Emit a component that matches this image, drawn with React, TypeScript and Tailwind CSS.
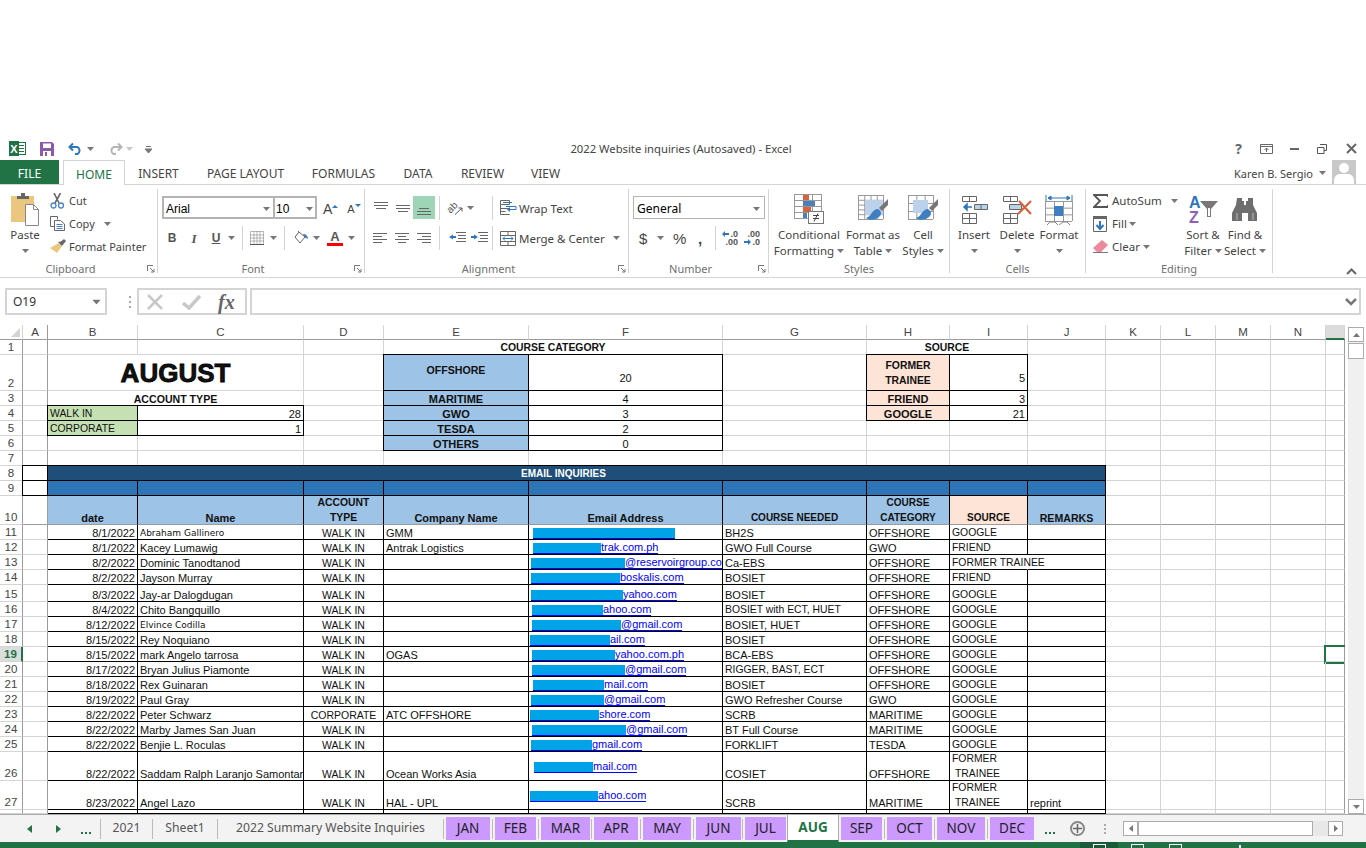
import React from "react";
import clsx from "clsx";
import { twMerge } from "tailwind-merge";

const UI = "font-['Noto_Sans',sans-serif]";
const ARIAL = "font-['Liberation_Sans',Arial,sans-serif]";

const Caret = ({ className }: { className?: string }) => (
  <svg width="7" height="4" viewBox="0 0 7 4" className={clsx("shrink-0", className)}>
    <path d="M0 0h7L3.5 4z" fill="#777" />
  </svg>
);

const Launcher = () => (
  <svg width="8" height="8" viewBox="0 0 8 8" className="absolute right-[2px] bottom-0">
    <path d="M.5 6V.5H6M3 3l4 4M7 4v3H4" fill="none" stroke="#777" />
  </svg>
);

// y, from, to
const Lines = ({ segs }: { segs: number[][] }) => (
  <svg width="14" height="14" viewBox="0 0 14 14">
    <path d={segs.map(([y, a, b]) => `M${a} ${y + 0.5}H${b}`).join("")} stroke="#666" />
  </svg>
);

const ExcelLogo = () => (
  <svg width="17" height="17" viewBox="0 0 17 17">
    <rect x="7.5" y="2.5" width="9" height="12" fill="#fff" stroke="#217346" />
    <path d="M10 5.5h5M10 8.5h5M10 11.5h5" stroke="#217346" />
    <rect x="0" y="1" width="10" height="15" fill="#217346" />
    <text x="5" y="12.5" textAnchor="middle" fontSize="11" fontWeight="700" fill="#fff" fontFamily="Liberation Sans">X</text>
  </svg>
);
const SaveIcon = () => (
  <svg width="14" height="14" viewBox="0 0 14 14">
    <path d="M0 0h12l2 2v12H0z" fill="#8a5bab" />
    <rect x="3" y="1.5" width="8" height="4.5" fill="#fff" />
    <rect x="3" y="9" width="8" height="5" fill="#fff" />
    <rect x="5" y="10" width="2" height="4" fill="#8a5bab" />
  </svg>
);
const UndoIcon = ({ color }: { color: string }) => (
  <svg width="15" height="13" viewBox="0 0 15 13">
    <path d="M5 1.5 1.5 5 5 8.500M2 5h7.500a4 4 0 0 1 0 7H7" fill="none" stroke={color} strokeWidth="2" />
  </svg>
);
const PasteIcon = () => (
  <svg width="30" height="34" viewBox="0 0 30 34">
    <rect x="1" y="3" width="23" height="26" fill="#eac67e" />
    <path d="M7 6V3h4V0h4v3h4v3z" fill="#666" />
    <path d="M15.500 11.500h8l5 5v16h-13z" fill="#fff" stroke="#888" />
    <path d="M23.500 11.500v5h5" fill="none" stroke="#888" />
  </svg>
);
const CutIcon = () => (
  <svg width="15" height="16" viewBox="0 0 15 16">
    <path d="M4 0l5 10M10.500 0 5 10" stroke="#666" strokeWidth="1.600" />
    <circle cx="3.500" cy="12.500" r="2.500" fill="none" stroke="#4a86c5" strokeWidth="1.300" />
    <circle cx="11" cy="12.500" r="2.500" fill="none" stroke="#4a86c5" strokeWidth="1.300" />
  </svg>
);
const CopyIcon = () => (
  <svg width="15" height="15" viewBox="0 0 15 15">
    <path d="M.5.500h7v3M.5.500v10h4" fill="none" stroke="#666" />
    <path d="M4.500 4.500h6l4 3.500v6.500h-10z" fill="#fff" stroke="#666" />
    <path d="M6.500 8.500h6M6.500 10.500h6M6.500 12.500h6" stroke="#4a7fba" />
  </svg>
);
const PainterIcon = () => (
  <svg width="16" height="15" viewBox="0 0 16 15">
    <path d="M9 4 12 7 7 14 0 9z" fill="#eac67e" />
    <path d="M8 3l4 4 1.500-2L16 2l-2-2-3 2.500z" fill="#666" />
  </svg>
);
const FillIcon = () => (
  <svg width="15" height="14" viewBox="0 0 15 14">
    <path d="M5 1 1 6l5 6 5-6z" fill="#fff" stroke="#666" />
    <path d="M5 1 4 0" stroke="#666" />
    <path d="M9 3c3 0 5 2 5 5-1-1-2-1-3-1z" fill="#4a7fba" />
  </svg>
);
const BordersIcon = () => (
  <svg width="14" height="14" viewBox="0 0 14 14">
    <path d="M.5.500h13v13H.5zM.5 7h13M7 .500v13M.5 4h13M.5 10h13M4 .500v13M10 .500v13" fill="none" stroke="#777" strokeDasharray="1 1" />
    <path d="M0 13.500h14" stroke="#555" />
  </svg>
);
const OrientationIcon = () => (
  <svg width="17" height="16" viewBox="0 0 17 16">
    <text x="0" y="11" fontSize="10" fill="#555" fontFamily="Liberation Sans" transform="rotate(-45 5 8)">ab</text>
    <path d="M8 14.500 15 8M15 8v3.500M15 8h-3.500" stroke="#555" fill="none" />
  </svg>
);
const IndentIcon = ({ right }: { right?: boolean }) => (
  <svg width="17" height="12" viewBox="0 0 17 12">
    <path d="M7 .500h10M9 3.500h8M9 6.500h8M7 9.500h10" stroke="#666" />
    <path d={right ? "M3 2.500 7 5 3 7.500V6H0V4h3z" : "M4 2.500 0 5l4 2.500V6h3V4H4z"} fill="#2d77bd" />
  </svg>
);
const WrapIcon = () => (
  <svg width="17" height="16" viewBox="0 0 17 16">
    <path d="M.5.500h9v4h-9zM.5 4.500v10h9M.5 8.500h9M.5 11.500h5" fill="none" stroke="#666" />
    <path d="M3 2.500h9M6 6.500h10v3h-8" fill="none" stroke="#2d77bd" />
    <path d="M10 7 7 9.500 10 12z" fill="#2d77bd" />
  </svg>
);
const MergeIcon = () => (
  <svg width="16" height="15" viewBox="0 0 16 15">
    <path d="M.5.500h15v14H.5zM.5 4.500h15M.5 10.500h15M8 .500v4M8 10.500v4" fill="none" stroke="#666" />
    <path d="M3 7.500h10M3 7.500l2-2M3 7.500l2 2M13 7.500l-2-2M13 7.500l-2 2" fill="none" stroke="#2d77bd" />
  </svg>
);
const Grid = ({ x, y, w, h, cols, rows }: { x: number; y: number; w: number; h: number; cols: number; rows: number }) => {
  let d = "";
  for (let i = 0; i <= cols; i++) d += `M${x + (i * w) / cols + 0.5} ${y}v${h}`;
  for (let i = 0; i <= rows; i++) d += `M${x} ${y + (i * h) / rows + 0.5}h${w}`;
  return <path d={d} stroke="#999" fill="none" />;
};
const CondIcon = () => (
  <svg width="30" height="31" viewBox="0 0 30 31">
    <Grid x={0} y={0} w={27} h={24} cols={3} rows={4} />
    <rect x="9" y="1" width="6" height="5" fill="#d8623c" />
    <rect x="9" y="7" width="12" height="5" fill="#4a7fba" />
    <rect x="9" y="13" width="8" height="5" fill="#d8623c" />
    <rect x="9" y="19" width="4" height="5" fill="#4a7fba" />
    <rect x="14.500" y="17.500" width="15" height="12" fill="#fff" stroke="#777" />
    <path d="M19 21.500h6M19 24.500h6M24 19.500l-4 8" stroke="#444" fill="none" />
  </svg>
);
const TableIcon = ({ big }: { big?: boolean }) => (
  <svg width="30" height="31" viewBox="0 0 30 31">
    <Grid x={0} y={1} w={25} h={24} cols={big ? 3 : 4} rows={big ? 3 : 5} />
    <rect x={big ? 5 : 7} y={6} width={big ? 15 : 18} height={big ? 13 : 15} fill="#bcd2ea" />
    <path d="M30 5 21 14l3 3 6-6z" fill="#777" />
    <path d="M20 15c-3 0-5 2-7 5-1 2-3 3-5 4 4 3 11 2 14-2 2-3 1-5-2-7z" fill="#3f7fc1" />
  </svg>
);
const InsertIcon = () => (
  <svg width="27" height="28" viewBox="0 0 27 28">
    <path d="M1.500.500h14v5h-14zM8.500.500v5M1.500 17.500h14v10h-14zM1.500 22.500h14M8.500 17.500v10" fill="none" stroke="#666" />
    <path d="M13.500 8.500h13v5h-13zM20 8.500v5" fill="#bcd2ea" stroke="#666" />
    <path d="M11 11H3M3 11l3-3v6z" stroke="#2d77bd" fill="#2d77bd" strokeWidth="1.500" />
  </svg>
);
const DeleteIcon = () => (
  <svg width="31" height="28" viewBox="0 0 31 28">
    <path d="M1.500.500h14v5h-14zM8.500.500v5M1.500 17.500h14v10h-14zM1.500 22.500h14M8.500 17.500v10" fill="none" stroke="#666" />
    <path d="M7.500 8.500h12v5h-12z" fill="#bcd2ea" stroke="#666" />
    <path d="M17 5l12 13M29 5 16 18" stroke="#d8623c" strokeWidth="2.200" />
  </svg>
);
const FormatIcon = () => (
  <svg width="28" height="30" viewBox="0 0 28 30">
    <path d="M1 0v6M27 0v6M3 3h22M3 3l3-2v4zM25 3l-3-2v4z" stroke="#2d77bd" fill="#2d77bd" />
    <Grid x={0} y={6} w={27} h={20} cols={3} rows={3} />
    <rect x="9" y="11" width="9" height="10" fill="#3f7fc1" />
    <path d="M2 30l3-3h5l3 3M14 30l4-3h4l3 3" fill="#fff" stroke="#888" />
  </svg>
);
const SigmaIcon = () => (
  <svg width="15" height="14" viewBox="0 0 15 14">
    <path d="M15 3V1H1l6 6-6 6h14v-2" fill="none" stroke="#555" strokeWidth="1.800" />
  </svg>
);
const FillDownIcon = () => (
  <svg width="14" height="16" viewBox="0 0 14 16">
    <path d="M.5.500h13v15H.5z" fill="#fff" stroke="#666" />
    <rect width="14" height="3" fill="#666" />
    <path d="M7 5v7M3.500 9 7 13l3.500-4" fill="none" stroke="#2d77bd" strokeWidth="2" />
  </svg>
);
const EraserIcon = () => (
  <svg width="15" height="13" viewBox="0 0 15 13">
    <path d="M9 0l6 5-7 7H4L0 8z" fill="#ec8a9c" />
    <path d="M0 12.500h15" stroke="#777" />
  </svg>
);
const SortIcon = () => (
  <svg width="31" height="31" viewBox="0 0 31 31">
    <text x="1" y="14" fontSize="16" fontWeight="700" fill="#2d77bd" fontFamily="Liberation Sans">A</text>
    <text x="1" y="29" fontSize="16" fontWeight="700" fill="#8f5fb5" fontFamily="Liberation Sans">Z</text>
    <path d="M12 7h18l-7 8v8h-4v-8z" fill="#777" />
    <path d="M20 14v8h2v-8z" fill="#fff" />
  </svg>
);
const FindIcon = () => (
  <svg width="26" height="23" viewBox="0 0 26 23">
    <path d="M5 0h5v3h2v4h2V3h2V0h5v7l4 8v8H16v-8h-6v8H0v-8l4-8z" fill="#6e6e6e" />
    <path d="M5 15v7M21 15v7" stroke="#bbb" />
  </svg>
);

// shared ribbon pieces
const Group = ({ w, label, launcher, children }: { w: string; label: string; launcher?: boolean; children: React.ReactNode }) => (
  <div className={clsx("relative flex h-[84px] shrink-0 flex-col border-r border-[#d4d4d4]", w)}>
    <div className="h-[73px] shrink-0">{children}</div>
    <div className={clsx("shrink-0 text-center text-[11px] leading-[14px] text-[#6f6f6f]", launcher && "pr-[16px]")}>{label}</div>
    {launcher && <Launcher />}
  </div>
);

const Big = ({ w, icon, l1, l2 }: { w: string; icon: React.ReactNode; l1: string; l2?: string }) => (
  <div className={clsx("flex shrink-0 flex-col items-center", w)}>
    <div className="mt-[3px] flex h-[35px] items-center justify-center">{icon}</div>
    <div className="leading-[16px]">{l1}</div>
    {l2 ? (
      <div className="flex items-center gap-[3px] leading-[16px]">
        {l2}
        <Caret />
      </div>
    ) : (
      <div className="flex h-[16px] items-center">
        <Caret />
      </div>
    )}
  </div>
);

const Small = ({ icon, label, caret, className }: { icon: React.ReactNode; label: string; caret?: React.ReactNode; className?: string }) => (
  <div className={clsx("flex h-[23px] items-center", className)}>
    <div className="flex w-[19px] shrink-0 items-center">{icon}</div>
    <span>{label}</span>
    {caret}
  </div>
);

const Btn = ({ w, children, className }: { w: string; children: React.ReactNode; className?: string }) => (
  <div className={clsx("flex h-[22px] shrink-0 items-center justify-center", w, className)}>{children}</div>
);
const Sep = ({ className }: { className?: string }) => <div className={clsx("h-[24px] w-px shrink-0 bg-[#d4d4d4]", className)} />;

const Ribbon = () => (
  <div className={clsx(UI, "flex h-[93px] border-b border-[#d4d4d4] pt-[4px] text-[11.5px] text-[#444]")}>
    <Group w="w-[158px]" label="Clipboard" launcher>
      <div className="flex">
        <Big w="w-[50px]" icon={<PasteIcon />} l1="Paste" />
        <div className="text-[11px]">
          <Small icon={<CutIcon />} label="Cut" />
          <Small icon={<CopyIcon />} label="Copy" caret={<Caret className="ml-[9px]" />} />
          <Small icon={<PainterIcon />} label="Format Painter" />
        </div>
      </div>
    </Group>

    <Group w="w-[207px]" label="Font" launcher>
      <div className="mt-[7px] ml-[4px] flex h-[23px]">
        <div className={clsx(ARIAL, "flex w-[111px] items-center justify-between border-2 border-r-0 border-[#b4b4b4] px-[2px] pt-[2px] text-[12px] text-black")}>
          Arial
          <Caret className="mr-[1px]" />
        </div>
        <div className={clsx(ARIAL, "flex w-[44px] items-center justify-between border-2 border-[#b4b4b4] px-[1px] pt-[2px] text-[12px] text-black")}>
          10
          <Caret className="mr-[1px]" />
        </div>
        <div className={clsx(ARIAL, "ml-[6px] flex items-end text-[14px] leading-[20px]")}>
          A<span className="mb-[11px] h-0 w-0 border-x-[3px] border-b-[3px] border-x-transparent border-b-[#2d77bd]" />
        </div>
        <div className={clsx(ARIAL, "ml-[9px] flex items-end text-[11px] leading-[19px]")}>
          A<span className="mb-[12px] h-0 w-0 border-x-[3px] border-t-[3px] border-x-transparent border-t-[#2d77bd]" />
        </div>
      </div>
      <div className="mt-[8px] ml-[3px] flex h-[22px] items-center">
        <Btn w="w-[22px]" className={clsx(ARIAL, "text-[12px] font-bold text-[#555]")}>B</Btn>
        <Btn w="w-[22px]" className="font-['Liberation_Serif',serif] text-[13px] font-bold text-[#555] italic">I</Btn>
        <Btn w="w-[22px]" className={clsx(ARIAL, "text-[12px] font-bold text-[#555] underline")}>U</Btn>
        <Caret className="ml-[1px]" />
        <Sep className="ml-[7px]" />
        <Btn w="w-[14px]" className="ml-[7px]"><BordersIcon /></Btn>
        <Caret className="ml-[6px]" />
        <Sep className="ml-[7px]" />
        <Btn w="w-[15px]" className="ml-[9px]"><FillIcon /></Btn>
        <Caret className="ml-[4px]" />
        <div className={clsx(ARIAL, "ml-[7px] flex w-[16px] flex-col items-center text-[13px] leading-[13px] font-bold text-[#555]")}>
          A<div className="h-[3px] w-[16px] bg-[#f00]" />
        </div>
        <Caret className="ml-[5px]" />
      </div>
    </Group>

    <Group w="w-[264px]" label="Alignment" launcher>
      <div className="mt-[7px] ml-[5px] flex h-[23px] items-center">
        <Btn w="w-[22px]"><Lines segs={[[1, 0, 14], [4, 0, 14], [7, 2, 12]]} /></Btn>
        <Btn w="w-[21px]"><Lines segs={[[4, 0, 14], [7, 0, 14], [10, 2, 12]]} /></Btn>
        <Btn w="w-[22px]" className="h-[23px] bg-[#9fd5b7]"><Lines segs={[[7, 2, 12], [10, 0, 14], [13, 0, 14]]} /></Btn>
        <Sep className="ml-[4px]" />
        <Btn w="w-[28px]" className="ml-[6px] gap-[3px]"><OrientationIcon /><Caret /></Btn>
        <Sep className="ml-[18px]" />
        <div className="ml-[7px] w-[19px]"><WrapIcon /></div>
        <span className="pt-[1px]">Wrap Text</span>
      </div>
      <div className="mt-[8px] ml-[4px] flex h-[22px] items-center">
        <Btn w="w-[22px]"><Lines segs={[[2, 0, 14], [5, 0, 9], [8, 0, 14], [11, 0, 9]]} /></Btn>
        <Btn w="w-[22px]"><Lines segs={[[2, 0, 14], [5, 3, 11], [8, 0, 14], [11, 3, 11]]} /></Btn>
        <Btn w="w-[22px]"><Lines segs={[[2, 0, 14], [5, 5, 14], [8, 0, 14], [11, 5, 14]]} /></Btn>
        <Sep className="ml-[4px]" />
        <Btn w="w-[22px]" className="ml-[6px]"><IndentIcon /></Btn>
        <Btn w="w-[22px]"><IndentIcon right /></Btn>
        <Sep className="ml-[2px]" />
        <div className="ml-[7px] w-[19px]"><MergeIcon /></div>
        <span>Merge &amp; Center</span>
        <Caret className="ml-[8px]" />
      </div>
    </Group>

    <Group w="w-[140px]" label="Number" launcher>
      <div className="mt-[7px] ml-[4px] flex h-[23px] w-[132px] items-center justify-between border border-[#b4b4b4] px-[3px] pt-[2px] text-[12px] text-black">
        General
        <Caret className="mr-[1px]" />
      </div>
      <div className="mt-[8px] ml-[10px] flex h-[22px] items-center">
        <span className={clsx(ARIAL, "w-[9px] text-[15px] leading-[15px]")}>$</span>
        <Caret className="ml-[9px]" />
        <span className={clsx(ARIAL, "ml-[9px] w-[14px] text-[15px] leading-[15px]")}>%</span>
        <span className={clsx(ARIAL, "ml-[11px] w-[5px] text-[15px] leading-[15px] font-bold")}>,</span>
        <Sep className="ml-[12px]" />
        <div className={clsx(ARIAL, "ml-[7px] flex w-[15px] flex-col items-end text-[9px] leading-[8px] font-bold text-[#555]")}>
          <span className="flex items-center">
            <svg width="7" height="6" viewBox="0 0 7 6" className="mr-[1px]"><path d="M3 0 0 3l3 3V4h4V2H3z" fill="#2d77bd" /></svg>.0
          </span>
          <span>.00</span>
        </div>
        <div className={clsx(ARIAL, "ml-[7px] flex w-[15px] flex-col items-end text-[9px] leading-[8px] font-bold text-[#555]")}>
          <span>.00</span>
          <span className="flex items-center">
            <svg width="7" height="6" viewBox="0 0 7 6" className="mr-[1px]"><path d="M4 0l3 3-3 3V4H0V2h4z" fill="#2d77bd" /></svg>.0
          </span>
        </div>
      </div>
    </Group>

    <Group w="w-[181px]" label="Styles">
      <div className="flex pl-[7px]">
        <Big w="w-[66px]" icon={<CondIcon />} l1="Conditional" l2="Formatting" />
        <Big w="w-[62px]" icon={<TableIcon />} l1="Format as" l2="Table" />
        <Big w="w-[38px]" icon={<TableIcon big />} l1="Cell" l2="Styles" />
      </div>
    </Group>

    <Group w="w-[136px]" label="Cells">
      <div className="flex pl-[5px]">
        <Big w="w-[38px]" icon={<InsertIcon />} l1="Insert" />
        <Big w="w-[48px]" icon={<DeleteIcon />} l1="Delete" />
        <Big w="w-[36px]" icon={<FormatIcon />} l1="Format" />
      </div>
    </Group>

    <Group w="w-[187px]" label="Editing">
      <div className="flex pl-[7px]">
        <div className="w-[89px]">
          <Small icon={<SigmaIcon />} label="AutoSum" caret={<Caret className="ml-[9px]" />} />
          <Small icon={<FillDownIcon />} label="Fill" caret={<Caret className="ml-[2px]" />} />
          <Small icon={<EraserIcon />} label="Clear" caret={<Caret className="ml-[3px]" />} />
        </div>
        <Big w="w-[42px]" icon={<SortIcon />} l1="Sort &" l2="Filter" />
        <Big w="w-[42px]" icon={<FindIcon />} l1="Find &" l2="Select" />
      </div>
    </Group>

    <div className="flex flex-1 items-end justify-end pr-[9px] pb-[2px]">
      <svg width="11" height="7" viewBox="0 0 11 7">
        <path d="M1 6l4.500-4.500L10 6" fill="none" stroke="#666" strokeWidth="2" />
      </svg>
    </div>
  </div>
);

const TitleBar = () => (
  <div className={clsx(UI, "flex h-[23px] items-center text-[11.25px] text-[#444]")}>
    <div className="flex w-[200px] items-center pl-[9px]">
      <ExcelLogo />
      <div className="ml-[14px]"><SaveIcon /></div>
      <div className="ml-[14px]"><UndoIcon color="#2d77bd" /></div>
      <Caret className="ml-[4px]" />
      <div className="ml-[14px] -scale-x-100"><UndoIcon color="#b4b4b4" /></div>
      <Caret className="ml-[3px] opacity-40" />
      <svg width="7" height="8" viewBox="0 0 7 8" className="ml-[12px]">
        <path d="M1 1.500h5M0 4h7L3.500 8z" stroke="#777" fill="#777" />
      </svg>
    </div>
    <div className="flex-1 pr-[4px] text-center">2022 Website inquiries (Autosaved) - Excel</div>
    <div className="flex w-[200px] items-center justify-end pr-[9px]">
      <span className="mr-[18px] text-[14px] leading-[14px] font-bold text-[#666]">?</span>
      <svg width="13" height="10" viewBox="0 0 13 10" className="mr-[17px]">
        <path d="M.5.500h12v9H.5zM.5 2.500h12M6.500 8V4M4.500 6l2-2 2 2" fill="none" stroke="#666" />
      </svg>
      <div className="mr-[18px] h-[2px] w-[9px] bg-[#666]" />
      <svg width="10" height="10" viewBox="0 0 10 10" className="mr-[19px]">
        <path d="M3 .500h6.500v6H7M.5 3.500H7v6H.5z" fill="#fff" stroke="#555" />
      </svg>
      <svg width="11" height="11" viewBox="0 0 11 11">
        <path d="M1 1l9 9M10 1l-9 9" stroke="#666" strokeWidth="2" />
      </svg>
    </div>
  </div>
);

const RibbonTabs = () => (
  <div className={clsx(UI, "flex h-[25px] items-stretch border-b border-[#d4d4d4] text-[12px] text-[#444]")}>
    <div className="flex w-[59px] items-center justify-center bg-[#217346] pt-[4px] text-white">FILE</div>
    <div className="relative ml-[4px] flex h-[25px] w-[62px] items-center justify-center border-x border-t border-[#d4d4d4] bg-white pt-[4px] text-[#217346]">HOME</div>
    <div className="flex w-[67px] items-center justify-center pt-[4px]">INSERT</div>
    <div className="flex w-[107px] items-center justify-center pt-[4px]">PAGE LAYOUT</div>
    <div className="flex w-[89px] items-center justify-center pt-[4px]">FORMULAS</div>
    <div className="flex w-[60px] items-center justify-center pt-[4px]">DATA</div>
    <div className="flex w-[69px] items-center justify-center pt-[4px]">REVIEW</div>
    <div className="flex w-[57px] items-center justify-center pt-[4px]">VIEW</div>
    <div className="ml-auto flex items-center pr-[10px]">
      <span className="pt-[4px] text-[11px]">Karen B. Sergio</span>
      <Caret className="mt-[2px] mr-[3px] ml-[6px]" />
      <div className="ml-[3px] flex h-[24px] w-[24px] flex-col items-center overflow-hidden bg-[#c8c8c8]">
        <div className="mt-[3px] h-[10px] w-[10px] rounded-full bg-white" />
        <div className="mt-[1px] h-[12px] w-[20px] rounded-t-[6px] bg-white" />
      </div>
    </div>
  </div>
);

const FormulaBar = () => (
  <div className="flex h-[47px] items-start pt-[10px]">
    <div className={clsx(UI, "ml-[5px] flex h-[27px] w-[102px] items-center justify-between border-2 border-[#d4d4d4] pr-[5px] pl-[6px] text-[12px] text-[#333]")}>
      O19
      <Caret className="scale-125" />
    </div>
    <div className="ml-[15px] flex h-[27px] w-[15px] flex-col items-center justify-center gap-[3px]">
      <div className="h-[2px] w-[2px] bg-[#aaa]" />
      <div className="h-[2px] w-[2px] bg-[#aaa]" />
      <div className="h-[2px] w-[2px] bg-[#aaa]" />
    </div>
    <div className="flex h-[27px] w-[110px] items-center border-2 border-[#d4d4d4] pl-[8px]">
      <svg width="16" height="16" viewBox="0 0 16 16"><path d="M1 1l14 14M15 1 1 15" stroke="#c8c8c8" strokeWidth="2.500" /></svg>
      <svg width="19" height="16" viewBox="0 0 19 16" className="ml-[19px]"><path d="M1 9l6 5L18 2" fill="none" stroke="#c8c8c8" strokeWidth="3.500" /></svg>
      <span className="ml-[17px] font-['Liberation_Serif',serif] text-[20px] leading-[20px] font-bold text-[#666] italic">fx</span>
    </div>
    <div className="ml-[3px] flex h-[27px] w-[1111px] items-center justify-end border-2 border-[#d4d4d4] pr-[2px]">
      <svg width="12" height="8" viewBox="0 0 12 8"><path d="M1 1l5 5 5-5" fill="none" stroke="#777" strokeWidth="2.500" /></svg>
    </div>
  </div>
);

// ---- sheet ----
const BOX = "border-r-black border-b-black shadow-[-1px_0_0_#000,0_-1px_0_#000,-1px_-1px_0_#000]";
const DATA = "border-r-black border-b-black";
const HEAD = "bg-[#9dc3e6] font-bold justify-center text-center border-r-black border-b-[#9b9b9b]";
const BOLD = "font-bold justify-center text-center";

const C = ({ className, children }: { className?: string; children?: React.ReactNode }) => (
  <div className={twMerge("flex items-end overflow-hidden border-r border-b border-[#d4d4d4] px-[2px] leading-[12px] whitespace-nowrap", className)}>
    {children}
  </div>
);

const ColHead = ({ label, className }: { label?: string; className?: string }) => (
  <div className={twMerge("flex items-center justify-center border-r border-b border-r-[#d4d4d4] border-b-[#9b9b9b] pt-[1px] text-[11.5px] text-[#444]", className)}>
    {label}
  </div>
);

const RowHead = ({ n, active }: { n?: number; active?: boolean }) => (
  <div
    className={clsx(
      "flex items-end justify-center overflow-hidden border-r border-b border-b-[#d4d4d4] text-[11.5px] leading-[13px]",
      active ? "border-r-2 border-r-[#217346] bg-[#dcdcdc] font-bold text-[#217346]" : "border-r-[#9b9b9b] text-[#444]"
    )}
  >
    {n}
  </div>
);

// K..O are always blank
const Tail = ({ row }: { row?: number }) => (
  <>
    <C className={clsx(row === 10 && "border-b-[#9b9b9b]")} />
    <C className={clsx(row === 10 && "border-b-[#9b9b9b]")} />
    <C className={clsx(row === 10 && "border-b-[#9b9b9b]")} />
    <C className={clsx(row === 10 && "border-b-[#9b9b9b]")} />
    <C className={clsx("border-r-[#9b9b9b]", row === 10 && "border-b-[#9b9b9b]", row === 19 && "overflow-visible outline-2 outline-[#217346]")} />
  </>
);
const A = ({ className }: { className?: string }) => <C className={twMerge("border-r-[#9b9b9b]", className)} />;

type Email = { left: number; bar: number; text: string; mid?: boolean };
type Row = {
  n: number;
  date: string;
  name: string;
  small?: boolean;
  type: string;
  company?: string;
  email: Email;
  course: string;
  cat: string;
  source: string;
  remarks?: string;
  tall?: boolean;
};

const rows: Row[] = [
  { n: 11, date: "8/1/2022", name: "Abraham Gallinero", small: true, type: "WALK IN", company: "GMM", email: { left: 533, bar: 142, text: "" }, course: "BH2S", cat: "OFFSHORE", source: "GOOGLE" },
  { n: 12, date: "8/1/2022", name: "Kacey Lumawig", type: "WALK IN", company: "Antrak Logistics", email: { left: 533, bar: 68, text: "trak.com.ph" }, course: "GWO Full Course", cat: "GWO", source: "FRIEND" },
  { n: 13, date: "8/2/2022", name: "Dominic Tanodtanod", type: "WALK IN", email: { left: 531, bar: 94, text: "@reservoirgroup.com" }, course: "Ca-EBS", cat: "OFFSHORE", source: "FORMER TRAINEE" },
  { n: 14, date: "8/2/2022", name: "Jayson Murray", type: "WALK IN", email: { left: 531, bar: 89, text: "boskalis.com" }, course: "BOSIET", cat: "OFFSHORE", source: "FRIEND" },
  { n: 15, date: "8/3/2022", name: "Jay-ar Dalogdugan", type: "WALK IN", email: { left: 531, bar: 92, text: "yahoo.com" }, course: "BOSIET", cat: "OFFSHORE", source: "GOOGLE" },
  { n: 16, date: "8/4/2022", name: "Chito Bangquillo", type: "WALK IN", email: { left: 532, bar: 71, text: "ahoo.com" }, course: "BOSIET with ECT, HUET", cat: "OFFSHORE", source: "GOOGLE" },
  { n: 17, date: "8/12/2022", name: "Elvince Codilla", small: true, type: "WALK IN", email: { left: 532, bar: 89, text: "@gmail.com" }, course: "BOSIET, HUET", cat: "OFFSHORE", source: "GOOGLE" },
  { n: 18, date: "8/15/2022", name: "Rey Noquiano", type: "WALK IN", email: { left: 530, bar: 80, text: "ail.com" }, course: "BOSIET", cat: "OFFSHORE", source: "GOOGLE" },
  { n: 19, date: "8/15/2022", name: "mark Angelo tarrosa", type: "WALK IN", company: "OGAS", email: { left: 532, bar: 83, text: "yahoo.com.ph" }, course: "BCA-EBS", cat: "OFFSHORE", source: "GOOGLE" },
  { n: 20, date: "8/17/2022", name: "Bryan Julius Piamonte", type: "WALK IN", email: { left: 532, bar: 93, text: "@gmail.com" }, course: "RIGGER, BAST, ECT", cat: "OFFSHORE", source: "GOOGLE" },
  { n: 21, date: "8/18/2022", name: "Rex Guinaran", type: "WALK IN", email: { left: 533, bar: 71, text: "mail.com" }, course: "BOSIET", cat: "OFFSHORE", source: "GOOGLE" },
  { n: 22, date: "8/19/2022", name: "Paul Gray", type: "WALK IN", email: { left: 531, bar: 73, text: "@gmail.com" }, course: "GWO Refresher Course", cat: "GWO", source: "GOOGLE" },
  { n: 23, date: "8/22/2022", name: "Peter Schwarz", type: "CORPORATE", company: "ATC OFFSHORE", email: { left: 530, bar: 69, text: "shore.com" }, course: "SCRB", cat: "MARITIME", source: "GOOGLE" },
  { n: 24, date: "8/22/2022", name: "Marby James San Juan", type: "WALK IN", email: { left: 532, bar: 94, text: "@gmail.com" }, course: "BT Full Course", cat: "MARITIME", source: "GOOGLE" },
  { n: 25, date: "8/22/2022", name: "Benjie L. Roculas", type: "WALK IN", email: { left: 531, bar: 61, text: "gmail.com" }, course: "FORKLIFT", cat: "TESDA", source: "GOOGLE" },
  { n: 26, date: "8/22/2022", name: "Saddam Ralph Laranjo Samontane", type: "WALK IN", company: "Ocean Works Asia", email: { left: 534, bar: 59, text: "mail.com", mid: true }, course: "COSIET", cat: "OFFSHORE", source: "FORMER", tall: true },
  { n: 27, date: "8/23/2022", name: "Angel Lazo", type: "WALK IN", company: "HAL - UPL", email: { left: 530, bar: 68, text: "ahoo.com", mid: true }, course: "SCRB", cat: "MARITIME", source: "FORMER", remarks: "reprint", tall: true },
];

const EmailCell = ({ e }: { e: Email }) => (
  <C className={clsx(DATA, "px-0", e.mid ? "items-center" : "items-end")}>
    {/* the blue bars hide the address in the original */}
    <div className="flex border-b border-[#0000ff] text-[#0000ff]" style={{ marginLeft: e.left - 529 }}>
      <div className="mt-[2px] h-[10px] bg-[#00a2e8]" style={{ width: e.bar }} />
      <span className="leading-[12px]">{e.text}</span>
    </div>
  </C>
);

const DataRow = ({ r }: { r: Row }) => (
  <>
    <RowHead n={r.n} active={r.n === 19} />
    <A />
    <C className={clsx(DATA, "justify-end")}>{r.date}</C>
    <C className={clsx(DATA, r.small && "font-['DejaVu_Sans',sans-serif] text-[9px]/[12px]")}>{r.name}</C>
    <C className={clsx(DATA, "justify-center text-[10.5px]/[12px]")}>{r.type}</C>
    <C className={DATA}>{r.company}</C>
    <EmailCell e={r.email} />
    <C className={clsx(DATA, r.course.includes("ECT") && "text-[10.4px]/[12px]")}>{r.course}</C>
    <C className={DATA}>{r.cat}</C>
    <C className={clsx(DATA, "text-[10.4px]/[12px]", r.n === 13 && "overflow-visible border-r-transparent")}>
      {r.tall ? (
        <div className="flex flex-col leading-[15px]">
          <span>FORMER</span>
          <span className="-mb-[1px] pl-[3px]">TRAINEE</span>
        </div>
      ) : (
        r.source
      )}
    </C>
    <C className={DATA}>{r.remarks}</C>
    <Tail row={r.n} />
  </>
);

const Sheet = () => (
  <div className="flex">
    <div
      className={clsx(
        ARIAL,
        "grid h-[489px] w-[1345px] shrink-0 grid-cols-[23px_25px_90px_166px_80px_145px_194px_144px_83px_78px_78px_55px_55px_55px_55px_19px] overflow-hidden text-[11px] text-[#111]",
        "grid-rows-[15px_15px_36px_15px_15px_15px_15px_15px_15px_15px_29px_15px_15px_15px_15px_17px_15px_15px_15px_15px_15px_15px_15px_15px_15px_15px_29px_29px_4px]"
      )}
    >
      <div className="flex items-end justify-end border-r border-b border-r-[#d4d4d4] border-b-[#9b9b9b] pr-[2px] pb-[2px]">
        <div className="h-0 w-0 border-b-[9px] border-l-[9px] border-b-[#d4d4d4] border-l-transparent" />
      </div>
      {["A", "B", "C", "D", "E", "F", "G", "H", "I", "J", "K", "L", "M", "N"].map((l) => (
        <ColHead key={l} label={l} className={l === "A" ? "border-r-[#9b9b9b]" : undefined} />
      ))}
      <ColHead className="border-b-2 border-b-[#217346] bg-[#dcdcdc]" />

      {/* 1 */}
      <RowHead n={1} />
      <A />
      <C /><C /><C />
      <C className={clsx(BOLD, "col-span-2 text-[10.4px]/[12px]")}>COURSE CATEGORY</C>
      <C />
      <C className={clsx(BOLD, "col-span-2 text-[10.4px]/[12px]")}>SOURCE</C>
      <C />
      <Tail />

      {/* 2 */}
      <RowHead n={2} />
      <A />
      <C className="col-span-2 items-center justify-center font-bold">
        <span className="text-[26px] leading-[30px] [-webkit-text-stroke:0.8px_black]">AUGUST</span>
      </C>
      <C />
      <C className={clsx(BOX, BOLD, "items-start bg-[#9dc3e6] pt-[9px] text-[10.6px]/[12px]")}>OFFSHORE</C>
      <C className={clsx(BOX, "justify-center pb-[6px]")}>20</C>
      <C />
      <C className={clsx(BOX, BOLD, "flex-col items-center justify-center bg-[#fde4d6] pt-[1px] text-[10.4px]/[15px]")}>
        <span>FORMER</span>
        <span>TRAINEE</span>
      </C>
      <C className={clsx(BOX, "justify-end pb-[6px]")}>5</C>
      <C />
      <Tail />

      {/* 3 */}
      <RowHead n={3} />
      <A />
      <C className={clsx(BOLD, "col-span-2 text-[10.6px]/[12px]")}>ACCOUNT TYPE</C>
      <C />
      <C className={clsx(BOX, BOLD, "bg-[#9dc3e6]")}>MARITIME</C>
      <C className={clsx(BOX, "justify-center")}>4</C>
      <C />
      <C className={clsx(BOX, BOLD, "bg-[#fde4d6]")}>FRIEND</C>
      <C className={clsx(BOX, "justify-end")}>3</C>
      <C />
      <Tail />

      {/* 4 */}
      <RowHead n={4} />
      <A />
      <C className={clsx(BOX, "bg-[#c5e0b3] text-[10.4px]/[12px]")}>WALK IN</C>
      <C className={clsx(BOX, "justify-end")}>28</C>
      <C />
      <C className={clsx(BOX, BOLD, "bg-[#9dc3e6]")}>GWO</C>
      <C className={clsx(BOX, "justify-center")}>3</C>
      <C />
      <C className={clsx(BOX, BOLD, "bg-[#fde4d6]")}>GOOGLE</C>
      <C className={clsx(BOX, "justify-end")}>21</C>
      <C />
      <Tail />

      {/* 5 */}
      <RowHead n={5} />
      <A />
      <C className={clsx(BOX, "bg-[#c5e0b3] text-[10.4px]/[12px]")}>CORPORATE</C>
      <C className={clsx(BOX, "justify-end")}>1</C>
      <C />
      <C className={clsx(BOX, BOLD, "bg-[#9dc3e6]")}>TESDA</C>
      <C className={clsx(BOX, "justify-center")}>2</C>
      <C /><C /><C /><C />
      <Tail />

      {/* 6 */}
      <RowHead n={6} />
      <A />
      <C /><C /><C />
      <C className={clsx(BOX, BOLD, "bg-[#9dc3e6]")}>OTHERS</C>
      <C className={clsx(BOX, "justify-center")}>0</C>
      <C /><C /><C /><C />
      <Tail />

      {/* 7 */}
      <RowHead n={7} />
      <A />
      <C /><C /><C /><C /><C /><C /><C /><C /><C />
      <Tail />

      {/* 8 */}
      <RowHead n={8} />
      <A className={BOX} />
      <C className={clsx(BOX, "col-span-9 justify-center bg-[#1f4e79] pr-[28px] text-[10px]/[12px] font-bold text-white")}>EMAIL INQUIRIES</C>
      <Tail />

      {/* 9 */}
      <RowHead n={9} />
      <A className={BOX} />
      {[0, 1, 2, 3, 4, 5, 6, 7, 8].map((i) => (
        <C key={i} className={clsx(BOX, "bg-[#2e75b6]")} />
      ))}
      <Tail />

      {/* 10 */}
      <RowHead n={10} />
      <A className="border-b-[#9b9b9b]" />
      <C className={HEAD}>date</C>
      <C className={HEAD}>Name</C>
      <C className={clsx(HEAD, "flex-col items-center justify-end text-[10.4px]/[15px]")}><span>ACCOUNT</span><span className="-mb-[1px]">TYPE</span></C>
      <C className={HEAD}>Company Name</C>
      <C className={HEAD}>Email Address</C>
      <C className={clsx(HEAD, "text-[10px]/[12px]")}>COURSE NEEDED</C>
      <C className={clsx(HEAD, "flex-col items-center justify-end text-[10px]/[15px]")}><span>COURSE</span><span className="-mb-[1px]">CATEGORY</span></C>
      <C className={clsx(HEAD, "bg-[#fde4d6] text-[10px]/[12px]")}>SOURCE</C>
      <C className={clsx(HEAD, "text-[10.6px]/[12px]")}>REMARKS</C>
      <Tail row={10} />

      {rows.map((r) => (
        <DataRow key={r.n} r={r} />
      ))}

      {/* 28 is cut off by the tab strip */}
      <RowHead />
      <A />
      {[0, 1, 2, 3, 4, 5, 6, 7, 8].map((i) => (
        <C key={i} className={DATA} />
      ))}
      <Tail />
    </div>
    <div className="flex h-[489px] flex-1 flex-col pt-[2px] pl-[3px]">
      <div className="flex w-[16px] flex-1 flex-col items-stretch bg-[#f0f0f0]">
        <div className="flex h-[15px] items-center justify-center border border-[#ababab] bg-white">
          <svg width="7" height="4" viewBox="0 0 7 4"><path d="M0 4h7L3.500 0z" fill="#777" /></svg>
        </div>
        <div className="mt-[1px] h-[16px] border border-[#ababab] bg-white" />
        <div className="flex-1" />
        <div className="flex h-[15px] items-center justify-center border border-[#ababab] bg-white">
          <Caret />
        </div>
      </div>
    </div>
  </div>
);

const Tab = ({ label, className }: { label: string; className: string }) => (
  <div className={clsx("flex h-[23px] shrink-0 items-center justify-center bg-[#cc99ff] text-[13.5px] text-[#222]", className)}>{label}</div>
);
const TabSep = ({ className }: { className?: string }) => <div className={clsx("h-[20px] w-px shrink-0 bg-[#bbb]", className)} />;
const Dots = ({ className }: { className?: string }) => (
  <div className={clsx("flex gap-[2px] self-end pb-[8px]", className)}>
    <div className="h-[2px] w-[2px] bg-[#217346]" />
    <div className="h-[2px] w-[2px] bg-[#217346]" />
    <div className="h-[2px] w-[2px] bg-[#217346]" />
  </div>
);

const SheetTabs = () => (
  <div className={clsx(UI, "flex h-[28px] items-center border-t border-[#ababab] bg-[#f3f3f3] text-[12.2px] text-[#555]")}>
    <svg width="5" height="8" viewBox="0 0 5 8" className="ml-[27px]"><path d="M5 0v8L0 4z" fill="#217346" /></svg>
    <svg width="5" height="8" viewBox="0 0 5 8" className="ml-[24px]"><path d="M0 0v8l5-4z" fill="#217346" /></svg>
    <Dots className="ml-[20px]" />
    <TabSep className="ml-[9px]" />
    <div className="w-[51px] shrink-0 text-center">2021</div>
    <TabSep />
    <div className="w-[64px] shrink-0 text-center">Sheet1</div>
    <TabSep />
    <div className="w-[225px] shrink-0 text-center">2022 Summary Website Inquiries</div>
    <TabSep />
    <Tab label="JAN" className="ml-[2px] w-[44px]" />
    <TabSep className="ml-[2px]" />
    <Tab label="FEB" className="ml-[2px] w-[41px]" />
    <TabSep className="ml-[2px]" />
    <Tab label="MAR" className="ml-[2px] w-[49px]" />
    <TabSep className="ml-[1px]" />
    <Tab label="APR" className="ml-[2px] w-[44px]" />
    <TabSep className="ml-[2px]" />
    <Tab label="MAY" className="ml-[2px] w-[48px]" />
    <TabSep className="ml-[2px]" />
    <Tab label="JUN" className="ml-[2px] w-[45px]" />
    <TabSep className="ml-[1px]" />
    <Tab label="JUL" className="ml-[2px] w-[41px]" />
    <div className="ml-[1px] flex h-[28px] w-[52px] shrink-0 items-center justify-center border-x border-[#ababab] border-b-[3px] border-b-[#217346] bg-white text-[13.5px] font-bold text-[#217346]">AUG</div>
    <Tab label="SEP" className="ml-[2px] w-[41px]" />
    <TabSep className="ml-[2px]" />
    <Tab label="OCT" className="ml-[2px] w-[45px]" />
    <TabSep className="ml-[2px]" />
    <Tab label="NOV" className="ml-[2px] w-[48px]" />
    <TabSep className="ml-[2px]" />
    <Tab label="DEC" className="ml-[2px] w-[44px]" />
    <Dots className="ml-[11px]" />
    <div className="ml-[15px] flex h-[15px] w-[15px] items-center justify-center rounded-full border-2 border-[#888]">
      <svg width="9" height="9" viewBox="0 0 9 9"><path d="M4.500 0v9M0 4.500h9" stroke="#666" strokeWidth="1.500" /></svg>
    </div>
    <div className="ml-[19px] flex flex-col gap-[2px]">
      <div className="h-[2px] w-[2px] bg-[#aaa]" />
      <div className="h-[2px] w-[2px] bg-[#aaa]" />
      <div className="h-[2px] w-[2px] bg-[#aaa]" />
    </div>
    <div className="ml-[17px] flex h-[15px] w-[220px] items-stretch bg-[#e8e8e8]">
      <div className="flex w-[15px] items-center justify-center border border-[#ababab] bg-white">
        <svg width="4" height="7" viewBox="0 0 4 7"><path d="M4 0v7L0 3.500z" fill="#777" /></svg>
      </div>
      <div className="w-[175px] border border-[#ababab] bg-white" />
      <div className="flex-1" />
      <div className="flex w-[15px] items-center justify-center border border-[#ababab] bg-white">
        <svg width="4" height="7" viewBox="0 0 4 7"><path d="M0 0v7l4-3.500z" fill="#777" /></svg>
      </div>
    </div>
  </div>
);

const StatusBar = () => (
  <div className="flex h-[6px] bg-[#217346]">
    <div className="ml-[1080px] flex h-[6px] w-[38px] justify-center bg-[#1a5c38]">
      <div className="mt-[2px] h-[4px] w-[13px] border border-b-0 border-white" />
    </div>
    <div className="mt-[2px] ml-[13px] h-[4px] w-[13px] border border-b-0 border-white" />
    <div className="mt-[2px] ml-[25px] h-[4px] w-[13px] border border-b-0 border-white" />
    <div className="mt-[3px] ml-[57px] h-[3px] w-[2px] bg-white" />
  </div>
);

export default function App() {
  return (
    <div className="flex h-[848px] w-[1366px] flex-col overflow-hidden bg-white">
      <div className="h-[138px]" />
      <TitleBar />
      <RibbonTabs />
      <Ribbon />
      <FormulaBar />
      <Sheet />
      <SheetTabs />
      <StatusBar />
    </div>
  );
}
